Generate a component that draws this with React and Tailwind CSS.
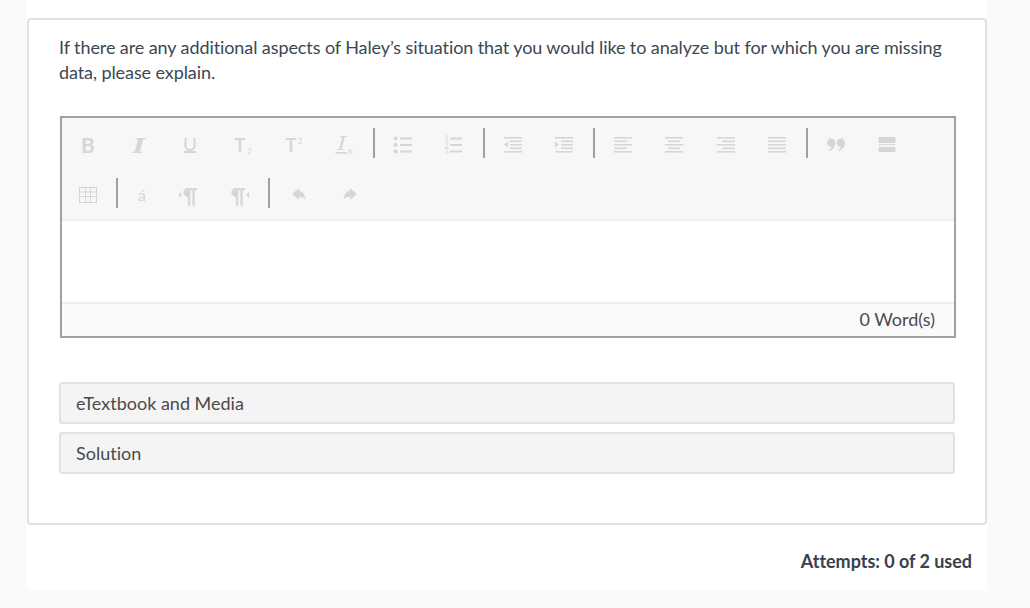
// Question card with a rich text toolbar

const ink = '#d6d6d6';

const Svg = ({ children }) => (
  <svg width="24" height="24" viewBox="0 0 24 24" fill={ink} stroke="none" className="overflow-visible">
    {children}
  </svg>
);

const Letter = ({ x, y, size, weight = 400, italic, family = 'Lato, sans-serif', stretch = 1, children }) => (
  <text
    x={x / stretch}
    y={y}
    fontSize={size}
    fontWeight={weight}
    fontStyle={italic ? 'italic' : 'normal'}
    fontFamily={family}
    fill={ink}
    textAnchor="middle"
    transform={stretch === 1 ? undefined : `scale(${stretch} 1)`}
  >
    {children}
  </text>
);

const Bars = ({ rows }) => (
  <>
    {rows.map(([x, y, w, h = 1.6], i) => (
      <rect key={i} x={x} y={y} width={w} height={h} />
    ))}
  </>
);

const serif = '"DejaVu Serif", serif';

const icons = {
  bold: <Svg><Letter x={12} y={20} size={21} weight={700}>B</Letter></Svg>,
  italic: <Svg><Letter x={12} y={20} size={21} weight={700} italic family={serif} stretch={1.25}>I</Letter></Svg>,
  underline: (
    <Svg>
      <path d="M6.5 5v7.5a5.5 5.5 0 0 0 11 0V5h-2v7.5a3.5 3.5 0 0 1-7 0V5z" />
      <rect x="6" y="18" width="12" height="2" />
    </Svg>
  ),
  sub: (
    <Svg>
      <Letter x={10} y={19} size={18} weight={700}>T</Letter>
      <Letter x={19} y={20.5} size={8}>2</Letter>
    </Svg>
  ),
  sup: (
    <Svg>
      <Letter x={10} y={19} size={18} weight={700}>T</Letter>
      <Letter x={19} y={11} size={8}>2</Letter>
    </Svg>
  ),
  clear: (
    <Svg>
      <Letter x={10} y={17} size={18} italic family={serif} stretch={1.25}>I</Letter>
      <rect x="3.5" y="19" width="11" height="1.6" />
      <Letter x={18} y={20.5} size={10}>x</Letter>
    </Svg>
  ),
  bullets: (
    <Svg>
      <circle cx="4.5" cy="5.5" r="2" />
      <circle cx="4.5" cy="12" r="2" />
      <circle cx="4.5" cy="18.5" r="2" />
      <Bars rows={[[9, 4.5, 12, 2], [9, 11, 12, 2], [9, 17.5, 12, 2]]} />
    </Svg>
  ),
  numbers: (
    <Svg>
      <Letter x={4.5} y={8} size={7}>1</Letter>
      <Letter x={4.5} y={14.5} size={7}>2</Letter>
      <Letter x={4.5} y={20.5} size={7}>3</Letter>
      <Bars rows={[[8, 4.5, 12, 2], [8, 11, 12, 2], [8, 17.5, 12, 2]]} />
    </Svg>
  ),
  outdent: (
    <Svg>
      <Bars rows={[[3, 4, 18], [9, 7.5, 12], [9, 11, 12], [9, 14.5, 12], [3, 18, 18]]} />
      <path d="M7 8.5v6l-4-3z" />
    </Svg>
  ),
  indent: (
    <Svg>
      <Bars rows={[[3, 4, 18], [9, 7.5, 12], [9, 11, 12], [9, 14.5, 12], [3, 18, 18]]} />
      <path d="M3 8.5v6l4-3z" />
    </Svg>
  ),
  left: <Svg><Bars rows={[[3, 4, 18], [3, 7.5, 13], [3, 11, 18], [3, 14.5, 13], [3, 18, 18]]} /></Svg>,
  center: <Svg><Bars rows={[[3, 4, 18], [6, 7.5, 12], [3, 11, 18], [6, 14.5, 12], [3, 18, 18]]} /></Svg>,
  right: <Svg><Bars rows={[[3, 4, 18], [8, 7.5, 13], [3, 11, 18], [8, 14.5, 13], [3, 18, 18]]} /></Svg>,
  justify: <Svg><Bars rows={[[3, 4, 18], [3, 7.5, 18], [3, 11, 18], [3, 14.5, 18], [3, 18, 18]]} /></Svg>,
  quote: (
    <Svg>
      <circle cx="7.2" cy="9.8" r="4.2" />
      <path d="M11.4 9.8c0 4-2.4 7-5.9 8.2l-.7-1.3c2-1 3.2-2.6 3.4-4.5z" />
      <circle cx="16.8" cy="9.8" r="4.2" />
      <path d="M21 9.8c0 4-2.4 7-5.9 8.2l-.7-1.3c2-1 3.2-2.6 3.4-4.5z" />
    </Svg>
  ),
  rule: (
    <Svg>
      <rect x="3.5" y="4" width="17" height="6" rx="1" />
      <rect x="3.5" y="11.2" width="17" height="1" />
      <rect x="3.5" y="14" width="17" height="5" rx="1" />
    </Svg>
  ),
  table: (
    <Svg>
      <path
        fillRule="evenodd"
        d="M3 4h18v16H3zM4 5v3.5h5V5zm6 0v3.5h4V5zm5 0v3.5h5V5zM4 9.5V13h5V9.5zm6 0V13h4V9.5zm5 0V13h5V9.5zM4 14v5h5v-5zm6 0v5h4v-5zm5 0v5h5v-5z"
      />
    </Svg>
  ),
  accent: <Svg><Letter x={12} y={18} size={16}>á</Letter></Svg>,
  ltr: (
    <Svg>
      <path d="M3 9v6l3-3z" />
      <Letter x={14} y={20} size={20} weight={700}>¶</Letter>
    </Svg>
  ),
  rtl: (
    <Svg>
      <Letter x={10} y={20} size={20} weight={700}>¶</Letter>
      <path d="M21 9v6l-3-3z" />
    </Svg>
  ),
  undo: <Svg><path d="M12 7.5V5l-7 6 7 6v-3.2c3 0 5 .8 6.5 3.2-.4-5-2.8-8.7-6.5-9.5z" /></Svg>,
  redo: <Svg><path d="M12 7.5V5l7 6-7 6v-3.2c-3 0-5 .8-6.5 3.2.4-5 2.8-8.7 6.5-9.5z" /></Svg>,
};

const rows = [
  ['bold', 'italic', 'underline', 'sub', 'sup', 'clear', '|', 'bullets', 'numbers', '|', 'outdent', 'indent', '|', 'left', 'center', 'right', 'justify', '|', 'quote', 'rule'],
  ['table', '|', 'accent', 'ltr', 'rtl', '|', 'undo', 'redo'],
];

function Toolbar() {
  return (
    <div className="flex flex-col bg-[#f7f7f7] border-b-2 border-[#eeeeee] h-[103px]">
      {rows.map((row, r) => (
        <div key={r} className="flex items-center h-[50px]">
          {row.map((name, i) =>
            name === '|' ? (
              <span key={i} className="w-[2px] h-[30px] bg-[#a0a0a0] ml-[3px] mr-[2.5px]" />
            ) : (
              <span
                key={i}
                className={
                  name === 'accent'
                    ? 'flex items-center justify-center w-[42px] h-[30px] pt-[4px]'
                    : 'flex items-center justify-center w-[51.3px] h-[30px] pt-[4px]'
                }
              >
                {icons[name]}
              </span>
            )
          )}
        </div>
      ))}
    </div>
  );
}

function Expander({ label }) {
  return (
    <div className="h-[42px] flex items-center pl-[15px] bg-[#f4f4f4] border-2 border-[#e2e2e2] rounded-[3px] text-[18px] text-[#4a4a4a]">
      {label}
    </div>
  );
}

export default function App() {
  return (
    <div className="min-h-[608px] bg-[#fafafa] font-['Lato',sans-serif] [font-variant-ligatures:none]">
      <div className="w-[960px] h-[590px] ml-[27px] bg-white pt-[18px]">
        <div className="h-[507px] border-2 border-[#e0e0e0] rounded-[4px] pl-[30px] pr-[30px] pt-[15px]">
          <p className="text-[18px] tracking-[-0.09px] leading-[25px] text-[#3a4853] w-[900px]">
            If there are any additional aspects of Haley’s situation that you would like to analyze but for which you are missing data, please explain.
          </p>

          <div className="mt-[31px] ml-[1px] w-[896px] h-[222px] border-2 border-[#a0a0a0] flex flex-col">
            <Toolbar />
            <div className="h-[81px] bg-white" />
            <div className="flex-1 flex items-center justify-end pr-[19px] pb-[2px] bg-[#fafafa] border-t-2 border-[#eeeeee] text-[18px] text-[#4a4a4a]">
              0 Word(s)
            </div>
          </div>

          <div className="mt-[44px] flex flex-col gap-2 w-[896px]">
            <Expander label="eTextbook and Media" />
            <Expander label="Solution" />
          </div>
        </div>

        <div className="mt-[25px] pr-[15px] text-right text-[18px] tracking-[-0.03px] leading-[22px] font-bold text-[#36424d]">
          Attempts: 0 of 2 used
        </div>
      </div>
    </div>
  );
}
